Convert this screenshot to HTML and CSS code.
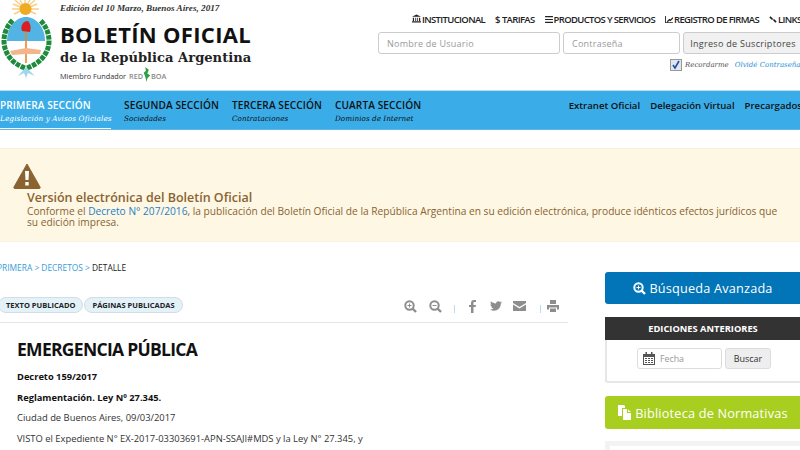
FILE: index.html
```html
<!DOCTYPE html>
<html lang="es">
<head>
    <meta charset="UTF-8">
    <title>Boletín Oficial de la República Argentina</title>
    <link rel="stylesheet" href="styles.css">
</head>
<body>
    <header class="top">
        <div class="brand">
            <svg class="escudo" width="54" height="80" viewBox="0 0 54 80">
                <g stroke="#f7cf86" stroke-width="1.4">
                    <path d="M25 9L15 0M25 9L20 0M25 9L25 0M25 9L30 0M25 9L35 0M25 9L13 4M25 9L37 4M25 9L12 9M25 9L39 9M25 9L14 14M25 9L36 14"/>
                </g>
                <circle cx="25.500" cy="9" r="6" fill="#efab22"/>
                <path d="M7 41C7 27 16 17 26 17C36 17 45 27 45 41C45 53 37 62 26 65C15 62 7 53 7 41Z" fill="#fff"/>
                <path d="M7 41C7 27 16 17 26 17C36 17 45 27 45 41Z" fill="#52b4e4"/>
                <path d="M25 68C13 64 4 54 4 41C4 33 7 26 13 20" fill="none" stroke="#1d8a3c" stroke-width="5" stroke-dasharray="4.500 1"/>
                <path d="M27 68C39 64 49 54 49 41C49 33 46 26 40 20" fill="none" stroke="#1d8a3c" stroke-width="5" stroke-dasharray="4.500 1"/>
                <path d="M26 24V63" stroke="#e8862a" stroke-width="1.600"/>
                <path d="M22 31C20 26 23 21 28 21C31 24 31 28 30 32Z" fill="#d9201f"/>
                <path d="M10 51L26 48L41 50L40 54L26 54L12 55Z" fill="#f3b68c"/>
                <path d="M18 76L26 67L35 76L28 73L26 78L24 73Z" fill="#9fd6ee"/>
            </svg>
            <div class="brand-text">
                <p class="edicion">Edición del 10 Marzo, Buenos Aires, 2017</p>
                <p class="boletin">BOLETÍN OFICIAL</p>
                <p class="republica">de la República Argentina</p>
                <p class="miembro">Miembro Fundador <span class="red">RED<svg width="8" height="15" viewBox="0 0 11 16" preserveAspectRatio="none"><path d="M3 0L8 3L6 7L10 9L6 12L5 16L3 10L1 6L4 4Z" fill="#2f9e44"/></svg>BOA</span></p>
            </div>
        </div>
        <div class="top-right">
            <nav class="links">
                <a><svg width="9" height="9" viewBox="0 0 11 10"><path d="M5.500 0L11 3H0ZM1 4H2.500V8H1ZM4 4H5V8H4ZM6 4H7V8H6ZM8.500 4H10V8H8.500ZM0 8.500H11V10H0Z" fill="#222"/></svg>INSTITUCIONAL</a>
                <a><span class="glyph">$</span>TARIFAS</a>
                <a><svg width="8" height="7" viewBox="0 0 9 8"><path d="M0 0H9V1.300H0ZM0 3.300H9V4.600H0ZM0 6.600H9V8H0Z" fill="#222"/></svg>PRODUCTOS Y SERVICIOS</a>
                <a><svg width="8" height="7" viewBox="0 0 9 8"><path d="M0 0V8H9V7H1V0ZM2 6L5 3L6 4L9 1V3L6 6L5 5L3 7Z" fill="#222"/></svg>REGISTRO DE FIRMAS</a>
                <a><svg width="8" height="7" viewBox="0 0 9 8"><path d="M1 1L4 4M5 4L8 7" stroke="#222" stroke-width="2" fill="none"/></svg>LINKS</a>
            </nav>
            <form class="login">
                <input class="user" type="text" placeholder="Nombre de Usuario">
                <input class="pass" type="text" placeholder="Contraseña">
                <button class="btn-sus" type="button">Ingreso de Suscriptores</button>
            </form>
            <div class="remember">
                <span class="check"><svg width="10" height="10" viewBox="0 0 10 10"><path d="M2 5L4 8L8 1" fill="none" stroke="#1d4f9c" stroke-width="1.600"/></svg></span>
                <span class="rec">Recordarme</span>
                <a class="olvide">Olvidé Contraseña</a>
            </div>
        </div>
    </header>

    <nav class="secciones">
        <a class="sec activa"><b>PRIMERA SECCIÓN</b><i>Legislación y Avisos Oficiales</i></a>
        <a class="sec"><b>SEGUNDA SECCIÓN</b><i>Sociedades</i></a>
        <a class="sec"><b>TERCERA SECCIÓN</b><i>Contrataciones</i></a>
        <a class="sec"><b>CUARTA SECCIÓN</b><i>Dominios de Internet</i></a>
        <div class="sec-right">
            <a>Extranet Oficial</a>
            <a>Delegación Virtual</a>
            <a>Precargados</a>
        </div>
    </nav>

    <section class="aviso">
        <svg class="warn" width="28" height="26" viewBox="0 0 28 26"><path d="M14 1L27 24C27.500 25 27 25.500 26 25.500H2C1 25.500 .5 25 1 24Z" fill="#8a6331" stroke="#8a6331" stroke-linejoin="round"/><path d="M12 8H16L15.500 17H12.500ZM12.300 19H15.700V22.500H12.300Z" fill="#fff"/></svg>
        <h4>Versión electrónica del Boletín Oficial</h4>
        <p>Conforme el <a>Decreto N° 207/2016</a>, la publicación del Boletín Oficial de la República Argentina en su edición electrónica, produce idénticos efectos jurídicos que su edición impresa.</p>
    </section>

    <main class="cuerpo">
        <div class="detalle">
            <p class="migas"><a>PRIMERA</a> &gt; <a>DECRETOS</a> &gt; <span>DETALLE</span></p>
            <div class="barra">
                <a class="pill">TEXTO PUBLICADO</a>
                <a class="pill">PÁGINAS PUBLICADAS</a>
                <div class="tools">
                    <svg width="13" height="13" viewBox="0 0 13 13"><circle cx="5.500" cy="5.500" r="4.200" fill="none" stroke="#8d8d8d" stroke-width="2"/><path d="M8.500 8.500L12 12" stroke="#8d8d8d" stroke-width="2.400"/><path d="M3.500 5.500H7.500M5.500 3.500V7.500" stroke="#8d8d8d"/></svg>
                    <svg class="t-zoom2" width="13" height="13" viewBox="0 0 13 13"><circle cx="5.500" cy="5.500" r="4.200" fill="none" stroke="#8d8d8d" stroke-width="2"/><path d="M8.500 8.500L12 12" stroke="#8d8d8d" stroke-width="2.400"/><path d="M3.500 5.500H7.500" stroke="#8d8d8d"/></svg>
                    <span class="sep"></span>
                    <svg class="t-fb" width="7" height="13" viewBox="0 0 7 13"><path d="M2 13V7H0V5H2V3C2 1 3 0 5 0H7V2H5.500C4.700 2 4.500 2.400 4.500 3V5H7L6.600 7H4.500V13Z" fill="#8d8d8d"/></svg>
                    <svg class="t-tw" width="12" height="10" viewBox="0 0 12 10"><path d="M12 1.200C11.500 1.400 11 1.600 10.600 1.600C11 1.300 11.400 .9 11.600 .3C11.100 .6 10.600 .8 10 .9C9 -.3 6.200 -.2 6 2.500C4 2.400 2.200 1.500 .9 .2C.2 1.500 .6 2.800 1.500 3.500C1.100 3.500 .7 3.400 .4 3.200C.4 4.500 1.300 5.400 2.400 5.700C2 5.800 1.700 5.800 1.300 5.700C1.600 6.700 2.500 7.400 3.600 7.400C2.600 8.200 1.300 8.600 0 8.500C5 11.500 11 8.500 10.800 2.500C11.300 2.200 11.700 1.700 12 1.200Z" fill="#8d8d8d"/></svg>
                    <svg class="t-mail" width="13" height="10" viewBox="0 0 13 10"><path d="M0 0H13V2L6.500 6L0 2ZM0 3.500L6.500 7.500L13 3.500V10H0Z" fill="#8d8d8d"/></svg>
                    <span class="sep sep2"></span>
                    <svg class="t-print" width="12" height="12" viewBox="0 0 12 12"><path d="M3 0H9V4H3ZM0 5H12V9.500H10V7.500H2V9.500H0ZM3 8.500H9V12H3Z" fill="#8d8d8d"/></svg>
                </div>
            </div>
            <h1>EMERGENCIA PÚBLICA</h1>
            <p class="tx neg">Decreto 159/2017</p>
            <p class="tx neg">Reglamentación. Ley Nº 27.345.</p>
            <p class="tx">Ciudad de Buenos Aires, 09/03/2017</p>
            <p class="tx">VISTO el Expediente N° EX-2017-03303691-APN-SSAJI#MDS y la Ley N° 27.345, y</p>
        </div>
        <aside class="lateral">
            <a class="big azul"><svg width="13" height="13" viewBox="0 0 13 13"><circle cx="5.500" cy="5.500" r="4.200" fill="none" stroke="#fff" stroke-width="2"/><path d="M8.500 8.500L12 12" stroke="#fff" stroke-width="2.400"/><path d="M3.500 5.500H7.500M5.500 3.500V7.500" stroke="#fff"/></svg>Búsqueda Avanzada</a>
            <div class="ediciones">
                <h5>EDICIONES ANTERIORES</h5>
                <div class="ed-form">
                    <div class="fecha">
                        <svg width="12" height="13" viewBox="0 0 12 13"><path d="M0 2H2.500V0H4V2H8V0H9.500V2H12V13H0ZM1 5V12H11V5ZM2 6H4V7H2ZM5 6H7V7H5ZM8 6H10V7H8ZM2 8H4V9H2ZM5 8H7V9H5ZM8 8H10V9H8ZM2 10H4V11H2ZM5 10H7V11H5ZM8 10H10V11H8Z" fill="#555"/></svg>
                        <span>Fecha</span>
                    </div>
                    <button type="button">Buscar</button>
                </div>
            </div>
            <a class="big verde"><svg width="14" height="15" viewBox="0 0 14 15"><path d="M0 0H6L7 1V3H4V11H0ZM5 4H9V8H13V15H5ZM10 4.500L13 7H10Z" fill="#fff"/></svg>Biblioteca de Normativas</a>
            <div class="caja"></div>
        </aside>
    </main>
</body>
</html>
```

FILE: styles.css
```css
html, body {
    margin: 0;
    height: 450px;
    overflow: hidden;
}

body {
    width: 800px;
    font-family: "Open Sans", sans-serif;
    color: #222;
    background: white;
}

p, h1, h4, h5 {
    margin: 0;
}

a {
    text-decoration: none;
}

.top {
    height: 90px;
    display: flex;
    justify-content: space-between;
    white-space: nowrap;
}

.brand {
    display: flex;
}

.escudo {
    flex: none;
}

.brand-text {
    margin-left: 6px;
}

.edicion {
    font: italic bold 9.200px/14px "Liberation Serif", serif;
    color: #333;
    margin-top: 1px;
}

.boletin {
    font-size: 22px;
    line-height: 28px;
    font-weight: 700;
    letter-spacing: .3px;
    color: #111;
    margin-top: 5px;
}

.republica {
    font: bold 13.100px/18px "DejaVu Serif", serif;
    color: #222;
    margin-top: 1px;
}

.miembro {
    font-size: 7.300px;
    color: #333;
    line-height: 14px;
    margin-top: 0;
}

.red {
    color: #8a8a8a;
    font-weight: 600;
    margin-left: 1px;
}

.red svg {
    vertical-align: -3px;
}

.top-right {
    width: 422px;
    flex: none;
}

.links {
    display: flex;
    gap: 10px;
    padding: 13px 0 0 34px;
    height: 19px;
    font-size: 9.500px;
    line-height: 14px;
    font-weight: 600;
    letter-spacing: -.65px;
    color: #222;
}

.links svg {
    margin-right: 1px;
}

.links .glyph {
    margin-right: 2px;
}

.login {
    display: flex;
    gap: 3px;
    margin: 0;
}

.login input {
    flex: none;
    box-sizing: border-box;
    height: 22px;
    border: 1px solid #ccc;
    border-radius: 3px;
    padding: 0 8px;
    font: 9px "Open Sans", sans-serif;
    letter-spacing: .25px;
}

.login input::placeholder {
    color: #999;
}

.user {
    width: 182px;
}

.pass {
    width: 117px;
}

.btn-sus {
    flex: none;
    height: 22px;
    width: 120px;
    border: 1px solid #ccc;
    border-radius: 3px;
    padding: 0;
    background: #f1f1f1;
    color: #444;
    font: 9px "Open Sans", sans-serif;
    letter-spacing: .3px;
}

.remember {
    display: flex;
    align-items: center;
    padding: 5px 0 0 292px;
    font: italic 7px/12px "DejaVu Serif", serif;
}

.check {
    box-sizing: border-box;
    width: 12px;
    height: 12px;
    border: 1px solid #999;
    background: #dfe6f0;
    display: flex;
    align-items: center;
    justify-content: center;
    margin-right: 3px;
}

.rec {
    color: #555;
}

.olvide {
    color: #2a8fd6;
    margin-left: 6px;
}

.secciones {
    height: 40px;
    box-sizing: border-box;
    background: #3aade9;
    border-top: 1px solid #b7def4;
    border-bottom: 1px solid #5cb8ea;
    display: flex;
    white-space: nowrap;
}

.sec {
    display: flex;
    flex-direction: column;
    padding: 8px 13px 0 0;
    color: #111;
}

.sec b {
    font-size: 10.100px;
    line-height: 13px;
    font-weight: 600;
    letter-spacing: .1px;
}

.sec i {
    font: italic 7.300px/12px "DejaVu Serif", serif;
    margin-top: 1px;
}

.activa {
    color: white;
    padding-right: 0;
    width: 111px;
    margin-right: 13px;
    box-shadow: inset 0 -1px 0 white;
}

.activa i {
    letter-spacing: .1px;
}

.sec-right {
    display: flex;
    gap: 10px;
    margin-left: auto;
    margin-right: -2px;
    padding-top: 8px;
    font-size: 9.600px;
    line-height: 13px;
    font-weight: 600;
    color: #111;
}

.aviso {
    margin-top: 18px;
    height: 94px;
    box-sizing: border-box;
    background: #fdf7e4;
    border-top: 1px solid #fbf1e0;
    border-bottom: 1px solid #fbf1e0;
    padding: 14px 20px 0 27px;
    color: #8a6331;
    font-size: 10.180px;
    line-height: 11px;
}

.warn {
    display: block;
    margin-left: -14px;
}

.aviso h4 {
    font-size: 12.500px;
    line-height: 15px;
    font-weight: 600;
    margin-top: 1px;
}

.aviso p {
    margin-top: 1px;
}

.aviso a {
    color: #1e7fc4;
}

.cuerpo {
    display: flex;
    height: 208px;
}

.detalle {
    width: 568px;
    flex: none;
}

.migas {
    font-size: 8.400px;
    line-height: 12px;
    margin-top: 20px;
    color: #3a9bd9;
    margin-left: -3px;
}

.migas a {
    color: #3a9bd9;
}

.migas span {
    color: #222;
}

.barra {
    display: flex;
    align-items: center;
    gap: 1px;
    margin: 23px 0 0 -2px;
    padding-bottom: 9px;
    border-bottom: 1px solid #e4e4e4;
    height: 16px;
}

.pill {
    box-sizing: border-box;
    height: 16px;
    padding: 0 7px;
    border: 1px solid #d3dde3;
    border-radius: 8px;
    background: #e3f1f9;
    font-size: 7.500px;
    line-height: 14px;
    font-weight: 700;
    color: #222;
    white-space: nowrap;
}

.tools {
    display: flex;
    align-items: center;
    margin-left: auto;
    margin-right: 9px;
    padding-top: 2px;
}

.t-zoom2 {
    margin-left: 12px;
}

.sep {
    width: 1px;
    height: 8px;
    background: #bcdcee;
    margin: 5px 14px 0 12px;
}

.t-tw {
    margin-left: 14px;
}

.t-mail {
    margin-left: 11px;
}

.sep2 {
    margin-left: 14px;
    margin-right: 6px;
}

h1 {
    font-size: 17.500px;
    line-height: 24px;
    font-weight: 700;
    letter-spacing: -.7px;
    color: #111;
    margin: 14px 0 10px 17px;
}

.tx {
    font-size: 9.400px;
    line-height: 12px;
    margin: 0 0 8.700px 17px;
    color: #333;
    white-space: nowrap;
}

.neg {
    font-weight: 700;
    color: #111;
    font-size: 9.300px;
}

.lateral {
    margin-left: 37px;
    width: 210px;
    flex: none;
    padding-top: 30px;
}

.big {
    display: flex;
    align-items: center;
    justify-content: center;
    gap: 3px;
    height: 33px;
    border-radius: 3px;
    color: white;
    font-size: 12.700px;
    letter-spacing: .2px;
    padding-right: 14px;
}

.azul {
    background: #0275b8;
    height: 32px;
}

.verde {
    background: #a8cf1f;
    margin-top: 13px;
}

.ediciones {
    margin-top: 13px;
    border: 2px solid #e6e6e6;
    border-top: 0;
    border-radius: 0 0 3px 3px;
    height: 64px;
}

.ediciones h5 {
    background: #333;
    color: white;
    font-size: 9.300px;
    line-height: 23px;
    font-weight: 700;
    text-align: center;
    margin: 0 -2px;
    padding-right: 14px;
}

.ed-form {
    display: flex;
    gap: 3px;
    padding: 8px 0 0 30px;
}

.fecha {
    box-sizing: border-box;
    width: 85px;
    height: 21px;
    border: 1px solid #ddd;
    border-radius: 3px;
    display: flex;
    align-items: center;
    gap: 5px;
    padding-left: 5px;
    font-size: 8.800px;
    color: #999;
}

.ed-form button {
    box-sizing: border-box;
    width: 46px;
    height: 21px;
    border: 1px solid #ddd;
    border-radius: 3px;
    padding: 0;
    background: #eee;
    font: 9px "Open Sans", sans-serif;
    color: #333;
}

.caja {
    margin-top: 12px;
    height: 20px;
    border: 5px solid #f3f3f3;
    border-bottom: 0;
}
```
